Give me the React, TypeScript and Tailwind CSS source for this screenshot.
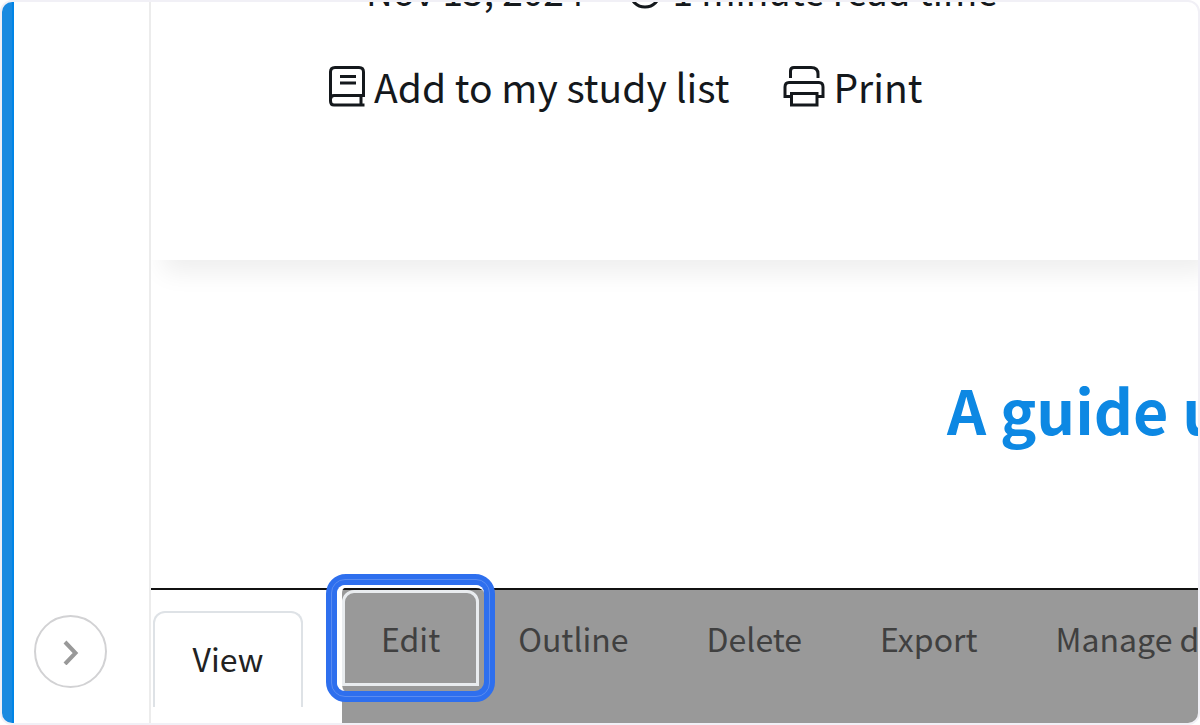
import React from 'react';

interface Tab {
  id: string;
  label: string;
}

const tabs: Tab[] = [
  { id: 'outline', label: 'Outline' },
  { id: 'delete', label: 'Delete' },
  { id: 'export', label: 'Export' },
  { id: 'manage', label: 'Manage display' },
];

function ClockIcon() {
  return (
    <svg width="34" height="38" viewBox="0 0 34 38" fill="none" stroke="currentColor" strokeWidth="3" aria-hidden="true">
      <circle cx="17" cy="21" r="15" />
      <path d="M17 12v9l5 4" />
    </svg>
  );
}

function BookIcon() {
  return (
    <svg width="38" height="42" viewBox="0 0 38 42" fill="none" stroke="currentColor" strokeWidth="3" aria-hidden="true">
      <path d="M36.500 40H6C3.500 40 2.500 38.500 2.500 36V7C2.500 4 4 2.500 7 2.500H31C34 2.500 35.500 4 35.500 7V30.500H6C4 30.500 2.500 32 2.500 34.500" />
      <path d="M33 30.500V40" />
      <path d="M12 11.500H28M12 18H28" />
    </svg>
  );
}

function PrinterIcon() {
  return (
    <svg width="42" height="42" viewBox="0 0 42 42" fill="none" stroke="currentColor" strokeWidth="3" aria-hidden="true">
      <path d="M7.500 13V6C7.500 3.500 9 2.500 11 2.500H28C33 2.500 35 5 35 9V13" />
      <path d="M8 31.500H2V22C2 18.500 3.500 17.500 6 17.500H36C38.500 17.500 40 18.500 40 22V31.500H34" />
      <path d="M8.500 28.500H34V40H8.500Z" />
    </svg>
  );
}

function Sidebar() {
  return (
    <aside className="flex w-[137px] shrink-0 flex-col items-center justify-end border-r-2 border-[#ececec] pb-[35px] pr-[22px]">
      <button
        type="button"
        aria-label="Expand sidebar"
        className="flex size-[73px] items-center justify-center rounded-full border-2 border-[#d2d2d4] text-[#999]"
      >
        <svg width="16" height="26" viewBox="0 0 16 26" fill="none" stroke="currentColor" strokeWidth="4" aria-hidden="true">
          <path d="M2 3L12.500 14L2 25" />
        </svg>
      </button>
    </aside>
  );
}

function ArticleHeader() {
  return (
    <header className="h-[258px] pl-[177px] leading-[48px] text-[#14181c] shadow-[12px_12px_24px_rgba(0,0,0,0.07)]">
      <div className="flex h-4 items-end gap-11 overflow-hidden pb-1 pl-[38px] text-[37px]">
        <span className="whitespace-nowrap">Nov 15, 2024</span>
        <span className="flex items-center gap-2.5 whitespace-nowrap">
          <ClockIcon />
          1 minute read time
        </span>
      </div>
      <div className="mt-11 flex gap-[54px] text-[39px]">
        <a href="#study-list" className="flex items-center gap-2 whitespace-nowrap">
          <BookIcon />
          Add to my study list
        </a>
        <a href="#print" className="flex items-center gap-2 whitespace-nowrap">
          <PrinterIcon />
          Print
        </a>
      </div>
    </header>
  );
}

function TabBar() {
  return (
    <nav className="flex h-[135px] border-t-2 border-[#111] text-[32px] leading-[40px]">
      <div className="w-[191px] shrink-0 pl-0.5 pt-[21px]">
        <a
          href="#view"
          className="flex h-24 w-[150px] items-center justify-center rounded-t-xl border-2 border-b-0 border-[#dee2e6] pb-1 text-[#222]"
        >
          View
        </a>
      </div>
      <div className="flex min-w-0 flex-1 items-start bg-[#999] text-[#404040]">
        <div className="relative shrink-0">
          <a
            href="#edit"
            className="flex h-24 items-center rounded-t-xl border-[3px] border-[#e9ecef] px-9"
          >
            Edit
          </a>
          {/* focus highlight */}
          <div className="pointer-events-none absolute -bottom-4 -left-4 -right-4 -top-4 rounded-[20px] border-[11px] border-[#2e6fee]">
            <div className="absolute -inset-[6px] rounded-[14px] border border-[#5a8cf0]" />
            <div className="h-full w-full rounded-lg border-l-[5px] border-t-[3px] border-white" />
          </div>
        </div>
        {tabs.map(tab => (
          <a key={tab.id} href={`#${tab.id}`} className="flex h-24 shrink-0 items-center whitespace-nowrap px-[39px]">
            {tab.label}
          </a>
        ))}
      </div>
    </nav>
  );
}

export default function App() {
  return (
    <div className="min-h-screen bg-white font-['Noto_Sans_CJK_SC','Noto_Sans',sans-serif]">
      <div className="flex min-h-screen overflow-hidden rounded-xl border-2 border-[#f1f0f6] bg-white">
        <div className="w-3 shrink-0 border-r-2 border-[#0084e6] bg-[#1a8ae0]" />
        <Sidebar />
        <main className="flex min-w-0 flex-1 flex-col overflow-hidden">
          <ArticleHeader />
          <div className="flex flex-1 items-center pb-[30px] pl-[796px]">
            <h1 className="whitespace-nowrap text-[61px] font-bold leading-[72px] text-[#0d88e3]">A guide using</h1>
          </div>
          <TabBar />
        </main>
      </div>
    </div>
  );
}
